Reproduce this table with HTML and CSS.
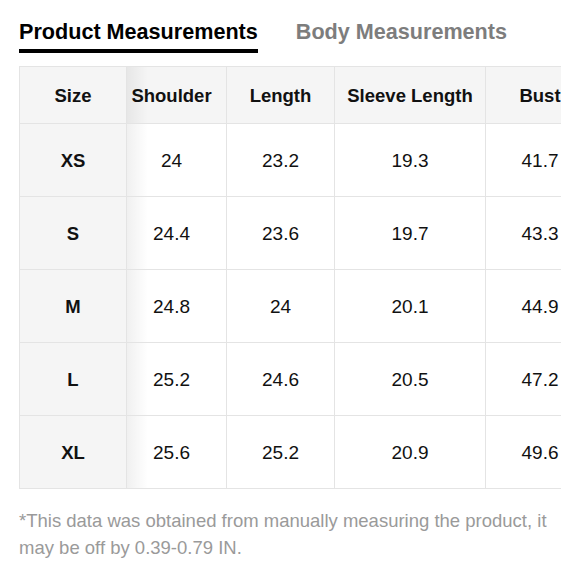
FILE: index.html
```html
<!DOCTYPE html>
<html>
<head>
<meta charset="utf-8">
<link rel="stylesheet" href="styles.css">
</head>
<body>
<div class="page">
  <div class="tabs">
    <div class="tab active">Product Measurements</div>
    <div class="tab">Body Measurements</div>
  </div>
  <div class="table-wrap">
    <table class="size-table">
      <colgroup>
        <col class="c-size">
        <col class="c-shoulder">
        <col class="c-length">
        <col class="c-sleeve">
        <col class="c-bust">
      </colgroup>
      <thead>
        <tr>
          <th class="fixed">Size</th>
          <th class="first">Shoulder</th>
          <th>Length</th>
          <th>Sleeve Length</th>
          <th>Bust</th>
        </tr>
      </thead>
      <tbody>
        <tr><td class="fixed">XS</td><td class="first">24</td><td>23.2</td><td>19.3</td><td>41.7</td></tr>
        <tr><td class="fixed">S</td><td class="first">24.4</td><td>23.6</td><td>19.7</td><td>43.3</td></tr>
        <tr><td class="fixed">M</td><td class="first">24.8</td><td>24</td><td>20.1</td><td>44.9</td></tr>
        <tr><td class="fixed">L</td><td class="first">25.2</td><td>24.6</td><td>20.5</td><td>47.2</td></tr>
        <tr><td class="fixed">XL</td><td class="first">25.6</td><td>25.2</td><td>20.9</td><td>49.6</td></tr>
      </tbody>
    </table>
  </div>
  <p class="note">*This data was obtained from manually measuring the product, it may be off by 0.39-0.79 IN.</p>
</div>
</body>
</html>
```

FILE: styles.css
```css
html, body {
  margin: 0;
  padding: 0;
  background: #ffffff;
}

body {
  font-family: "Liberation Sans", Arial, Helvetica, sans-serif;
  color: #111111;
}

.page {
  padding: 20px 19px 0 19px;
}

.tabs {
  display: flex;
  gap: 38px;
  align-items: flex-start;
}

.tab {
  font-size: 21.6px;
  font-weight: bold;
  line-height: 24px;
  color: #7d7d7d;
  padding-bottom: 5px;
}

.tab.active {
  color: #000000;
  border-bottom: 4px solid #000000;
}

.table-wrap {
  margin-top: 13px;
  width: 542px;
  overflow: hidden;
}

.size-table {
  border-collapse: collapse;
  table-layout: fixed;
  width: 575px;
}

.c-size { width: 107px; }
.c-shoulder { width: 100px; }
.c-length { width: 108px; }
.c-sleeve { width: 151px; }
.c-bust { width: 109px; }

.size-table th,
.size-table td {
  border: 1px solid #e4e4e4;
  text-align: center;
  padding: 2px 0 0 0;
  color: #111111;
}

.size-table th {
  height: 54px;
  font-size: 18.5px;
  font-weight: bold;
  background: #f5f5f5;
}

.size-table td {
  height: 70px;
  font-size: 19px;
  font-weight: normal;
}

.size-table .first {
  padding-right: 10px;
}

.size-table .fixed {
  position: relative;
  background: #f5f5f5;
  font-size: 18.5px;
  font-weight: bold;
}

.size-table .fixed::after {
  content: "";
  position: absolute;
  top: 0;
  bottom: 0;
  right: -22px;
  width: 21px;
  background: linear-gradient(to right, rgba(0, 0, 0, 0.06), rgba(0, 0, 0, 0));
  pointer-events: none;
}

.note {
  margin: 18px 0 0 0;
  font-size: 18.5px;
  line-height: 27px;
  color: #9a9a9a;
  width: 542px;
}
```
